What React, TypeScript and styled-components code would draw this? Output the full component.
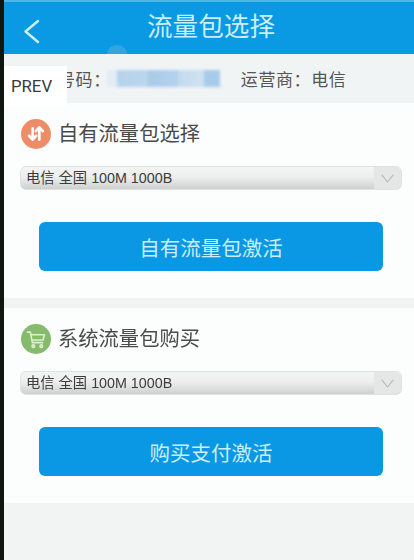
import styled, { createGlobalStyle } from "styled-components"

const CJK = `"Liberation Sans", "Noto Sans CJK SC", sans-serif`

const GlobalStyle = createGlobalStyle`
html, body {
    margin: 0;
    padding: 0;
    background: #f2f3f3;
}
* {
    box-sizing: border-box;
}
`

const ArrowsIcon = () => (
    <svg width="20" height="20" viewBox="0 0 18 18" fill="none" stroke="#fff" strokeWidth="2.4" strokeLinecap="round" strokeLinejoin="round">
        <path d="M6 4v10M2.8 10.6 6 14l3.2-3.4" />
        <path d="M12 14V3M8.8 6.4 12 3l3.2 3.4" />
    </svg>
)

const CartIcon = () => (
    <svg width="21" height="21" viewBox="0 0 20 20" fill="none" stroke="#dcefc9" strokeWidth="1.6" strokeLinecap="round" strokeLinejoin="round">
        <path d="M1.5 3h2.6l2 10h9.6" />
        <path d="M4.6 5.5h13l-1.4 5H5.6" />
        <circle cx="7" cy="16.4" r="1.2" />
        <circle cx="14.6" cy="16.4" r="1.2" />
    </svg>
)

const BackIcon = () => (
    <svg width="17" height="25" viewBox="0 0 17 25" fill="none" stroke="#cdeefc" strokeWidth="2.4" strokeLinecap="round" strokeLinejoin="round">
        <path d="M15 2 2.5 12.5 15 23" />
    </svg>
)

const ChevronIcon = () => (
    <svg width="13" height="9" viewBox="0 0 13 9" fill="none" stroke="#b4b8ba" strokeWidth="1.1" strokeLinecap="round" strokeLinejoin="round">
        <path d="M1 1.2 6.5 8 12 1.2" />
    </svg>
)

const Package = ({ title, icon, tone, action }: { title: string; icon: React.ReactNode; tone: string; action: string }) => (
    <Section>
        <SectionTitle>
            <Badge $tone={tone}>{icon}</Badge>
            <SectionName>{title}</SectionName>
        </SectionTitle>
        <Dropdown>
            <DropdownText>电信 全国 100M 1000B</DropdownText>
            <DropdownArrow>
                <ChevronIcon />
            </DropdownArrow>
        </Dropdown>
        <ActionButton>{action}</ActionButton>
    </Section>
)

const App = () => {
    return (
        <Screen>
            <GlobalStyle />
            <PrevTag>PREV</PrevTag>
            <Soft>
                <Header>
                    <BackButton>
                        <BackIcon />
                    </BackButton>
                    <HeaderTitle>流量包选择</HeaderTitle>
                    <Bump />
                </Header>
                <InfoRow>
                    <InfoLabel>{"号码\uFF1A"}</InfoLabel>
                    <BlurredNumber />
                    <InfoLabel>{"运营商\uFF1A电信"}</InfoLabel>
                </InfoRow>
                <Package title="自有流量包选择" icon={<ArrowsIcon />} tone="#ec8d67" action="自有流量包激活" />
                <Divider />
                <Package title="系统流量包购买" icon={<CartIcon />} tone="#86ba6d" action="购买支付激活" />
                <Footer />
            </Soft>
        </Screen>
    )
}

export default App

const Screen = styled.div`
position: relative;
width: 414px;
height: 560px;
overflow: hidden;
border-left: 4px solid #10150f;
background: #f2f3f3;
font-family: ${CJK};
`
const Soft = styled.div`
display: flex;
flex-direction: column;
height: 100%;
filter: blur(0.45px);
`
const PrevTag = styled.div`
position: absolute;
z-index: 2;
left: -2px;
top: 66px;
width: 65px;
height: 40px;
padding: 0 6px 0 0;
display: flex;
align-items: center;
justify-content: center;
background: #fff;
color: #3a3a3a;
font-family: "Roboto", sans-serif;
font-size: 16.8px;
`
const Header = styled.div`
position: relative;
flex: none;
height: 54px;
border-top: 2px solid #4fb4e6;
display: flex;
align-items: center;
justify-content: center;
background: #0a9ae3;
`
const BackButton = styled.div`
position: absolute;
left: 19px;
top: 17px;
display: flex;
`
const HeaderTitle = styled.div`
margin: 0 0 3px 4px;
color: #c9eefc;
font-size: 25.6px;
line-height: 30px;
`
const Bump = styled.div`
position: absolute;
left: 103px;
bottom: 0;
width: 20px;
height: 9px;
border-radius: 10px 10px 0 0;
background: #2fa6df;
`
const InfoRow = styled.div`
flex: none;
height: 49px;
display: flex;
align-items: center;
padding-left: 54px;
background: #f1f4f5;
`
const InfoLabel = styled.div`
color: #555;
font-size: 17px;
letter-spacing: 0.6px;
white-space: nowrap;
`
const BlurredNumber = styled.div`
width: 113px;
height: 17px;
margin: 0 21px 0 -4px;
filter: blur(1.5px);
background: linear-gradient(90deg, #e3edf5 0, #e3edf5 9px, #b5d2ec 11px, #bcd6ed 40px, #a8cbe9 42px, #b4d2ec 70px, #c4dbef 72px, #cfe2f2 96px, #a7cbe9 98px);
`
const Section = styled.div`
flex: none;
height: 195px;
display: flex;
flex-direction: column;
align-items: center;
background: #fcfdfd;
`
const SectionTitle = styled.div`
align-self: flex-start;
display: flex;
align-items: center;
gap: 7px;
height: 30px;
margin: 16px 0 0 17px;
`
const Badge = styled.div<{ $tone: string }>`
width: 30px;
height: 30px;
border-radius: 50%;
display: flex;
align-items: center;
justify-content: center;
background: ${(p) => p.$tone};
`
const SectionName = styled.div`
margin-bottom: 4px;
color: #4a4a4a;
font-size: 20.3px;
`
const Dropdown = styled.div`
width: 382px;
height: 24px;
margin-top: 17px;
margin-left: 4px;
display: flex;
align-items: stretch;
justify-content: space-between;
border-radius: 6px;
overflow: hidden;
background: linear-gradient(180deg, #f4f4f4 0, #eeeeee 45%, #cfd0d0 100%);
border: 1px solid #e0e1e1;
`
const DropdownText = styled.div`
padding-left: 5px;
color: #3c3c3c;
font-size: 14.3px;
line-height: 22px;
white-space: nowrap;
`
const DropdownArrow = styled.div`
width: 27px;
display: flex;
align-items: center;
justify-content: center;
background: #e5e6e6;
`
const ActionButton = styled.div`
width: 344px;
height: 49px;
margin-top: 32px;
margin-left: 4px;
display: flex;
align-items: center;
justify-content: center;
border-radius: 6px;
background: #0a98e4;
color: #c9eefc;
font-size: 20.5px;
`
const Divider = styled.div`
flex: none;
height: 10px;
background: #f1f3f3;
`
const Footer = styled.div`
flex: 1;
background: #f2f3f3;
`
